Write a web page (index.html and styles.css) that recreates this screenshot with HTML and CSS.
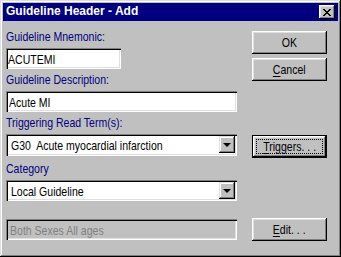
FILE: index.html
```html
<!DOCTYPE html>
<html>
<head>
<meta charset="utf-8">
<link rel="stylesheet" href="styles.css">
</head>
<body>
<div class="window">
  <div class="titlebar">
    <span class="title">Guideline Header - Add</span>
    <span class="close"><svg width="8" height="7" viewBox="0 0 8 7" shape-rendering="crispEdges"><path d="M0 0h2v1h1v1h2V1h1V0h2v1H7v1H6v1H5v1h1v1h1v1h1v1H6V6H5V5H3v1H2v1H0V6h1V5h1V4h1V3H2V2H1V1H0z" fill="#000"/></svg></span>
  </div>
  <div class="content">
    <div class="fields">
      <div class="lbl"><span class="t">Guideline Mnemonic:</span></div>
      <div class="edit short"><span class="t">ACUTEMI</span></div>
      <div class="lbl"><span class="t">Guideline Description:</span></div>
      <div class="edit"><span class="t">Acute MI</span></div>
      <div class="lbl"><span class="t">Triggering Read Term(s):</span></div>
      <div class="combo tall"><span class="combo-text"><span class="t">G30  Acute myocardial infarction</span></span><span class="drop"><span class="arrow"></span></span></div>
      <div class="lbl cat"><span class="t">Category</span></div>
      <div class="combo"><span class="combo-text"><span class="t">Local Guideline</span></span><span class="drop"><span class="arrow"></span></span></div>
      <div class="edit disabled"><span class="t">Both Sexes All ages</span></div>
    </div>
    <div class="buttons">
      <button class="btn ok"><span class="t">OK</span></button>
      <button class="btn cancel"><span class="t"><u>C</u>ancel</span></button>
      <button class="btn triggers"><span class="focus"><span class="t"><u>T</u>riggers. . .</span></span></button>
      <button class="btn editbtn"><span class="t"><u>E</u>dit. . .</span></button>
    </div>
  </div>
</div>
</body>
</html>
```

FILE: styles.css
```css
html, body {
  margin: 0;
  padding: 0;
  background: #c0c0c0;
}
body {
  font-family: "Liberation Sans", Arial, sans-serif;
  font-size: 13px;
}
.t {
  display: inline-block;
  white-space: pre;
  transform: scaleX(0.81);
  transform-origin: 0 50%;
}
.window {
  width: 341px;
  height: 257px;
  box-sizing: border-box;
  padding: 3px;
  background: #c0c0c0;
  box-shadow: inset -1px -1px #000, inset 1px 1px #dfdfdf, inset -2px -2px #808080, inset 2px 2px #fff;
}
.titlebar {
  height: 18px;
  background: #000080;
  display: flex;
  align-items: center;
  justify-content: space-between;
  padding: 0 3px 0 3px;
}
.title {
  font-weight: bold;
  font-size: 12px;
  color: #fff;
  line-height: 18px;
  margin-top: -2px;
}
.close {
  width: 16px;
  height: 14px;
  box-sizing: border-box;
  background: #c0c0c0;
  box-shadow: inset -1px -1px #000, inset 1px 1px #fff, inset -2px -2px #808080, inset 2px 2px #dfdfdf;
  display: flex;
  align-items: center;
  justify-content: center;
}
.close svg { display: block; margin-left: -1px; }
.content {
  display: flex;
  padding: 0 0 0 3px;
}
.fields {
  width: 231px;
  padding-top: 8px;
  display: flex;
  flex-direction: column;
}
.lbl {
  color: #000080;
  line-height: 16px;
  height: 16px;
  margin-bottom: 3px;
}
.lbl.cat { margin-top: 2px; }
.edit {
  height: 21px;
  box-sizing: border-box;
  background: #fff;
  box-shadow: inset 1px 1px #808080, inset 2px 2px #000, inset -1px -1px #fff, inset -2px -2px #dfdfdf;
  padding: 2px 3px 0 3px;
  line-height: 19px;
  overflow: hidden;
  white-space: nowrap;
  margin-bottom: 3px;
}
.edit.short {
  width: 115px;
  padding-left: 2px;
}
.edit.disabled {
  background: #c0c0c0;
  color: #808080;
  margin-top: 15px;
  padding-left: 4px;
}
.combo {
  height: 21px;
  box-sizing: border-box;
  background: #fff;
  box-shadow: inset 1px 1px #808080, inset 2px 2px #000, inset -1px -1px #fff, inset -2px -2px #dfdfdf;
  display: flex;
  align-items: flex-start;
  margin-bottom: 3px;
}
.combo.tall { height: 22px; }
.combo-text {
  padding: 3px 0 0 5px;
  line-height: 17px;
  white-space: pre;
  flex: 1;
}
.drop {
  width: 16px;
  height: 17px;
  margin: 2px 2px 0 0;
  box-sizing: border-box;
  background: #c0c0c0;
  box-shadow: inset -1px -1px #000, inset 1px 1px #dfdfdf, inset -2px -2px #808080, inset 2px 2px #fff;
  display: flex;
  align-items: center;
  justify-content: center;
}
.arrow {
  width: 0;
  height: 0;
  border-left: 4px solid transparent;
  border-right: 4px solid transparent;
  border-top: 4px solid #000;
  margin-left: -1px;
}
.buttons {
  margin-left: 15px;
  display: flex;
  flex-direction: column;
}
.btn {
  width: 75px;
  height: 23px;
  box-sizing: border-box;
  border: none;
  padding: 0;
  background: #c0c0c0;
  font-family: "Liberation Sans", Arial, sans-serif;
  font-size: 13px;
  color: #000;
  box-shadow: inset -1px -1px #000, inset 1px 1px #fff, inset -2px -2px #808080, inset 2px 2px #dfdfdf;
  display: flex;
  align-items: center;
  justify-content: center;
}
.btn .t { transform-origin: 50% 50%; }
.btn u { text-underline-offset: 2px; }
.ok { margin-top: 10px; }
.cancel { margin-top: 4px; }
.triggers {
  margin-top: 54px;
  box-shadow: inset 0 0 0 1px #000, inset -2px -2px #000, inset 2px 2px #fff, inset -3px -3px #808080, inset 3px 3px #dfdfdf;
}
.focus {
  width: 67px;
  height: 15px;
  box-sizing: border-box;
  border: 1px dotted #000;
  display: flex;
  align-items: center;
  justify-content: center;
  white-space: nowrap;
}
.editbtn { margin-top: 60px; }
```
